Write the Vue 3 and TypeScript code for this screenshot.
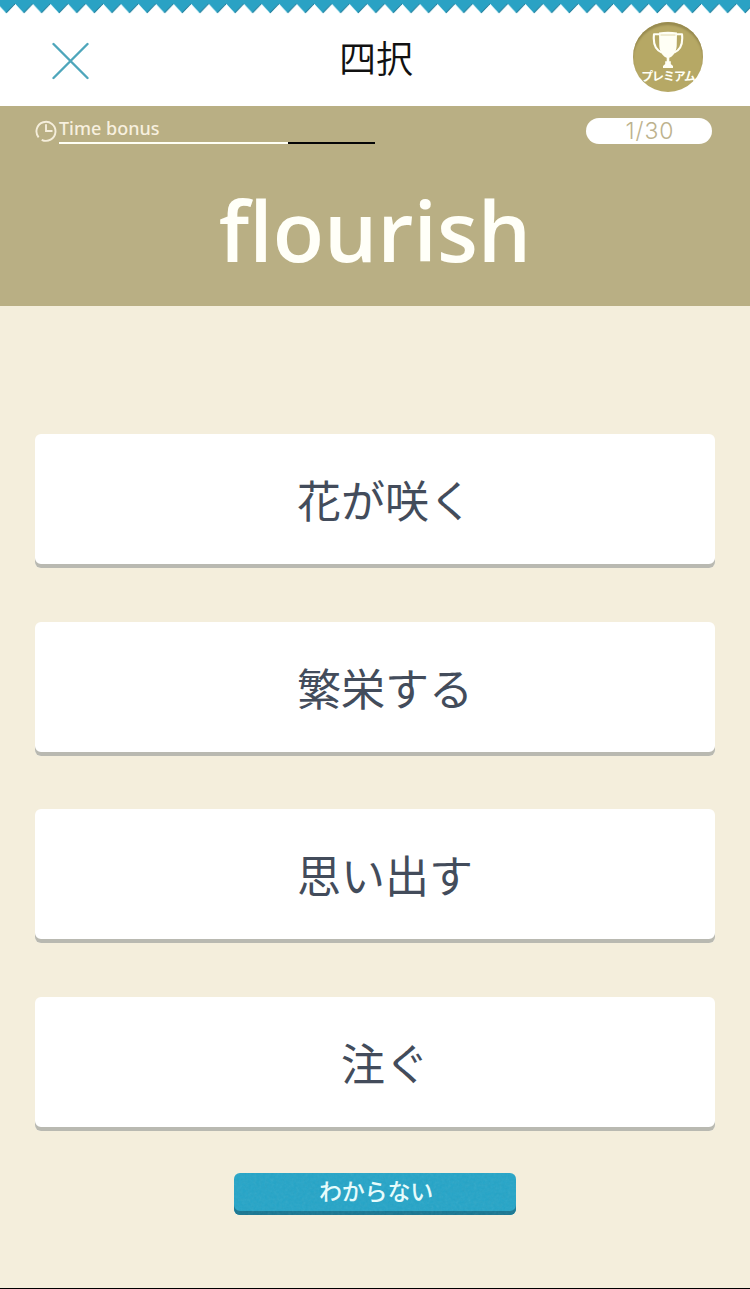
<script setup lang="ts">
interface Choice {
  id: number
  label: string
}

const choices: Choice[] = [
  { id: 1, label: '花が咲く' },
  { id: 2, label: '繁栄する' },
  { id: 3, label: '思い出す' },
  { id: 4, label: '注ぐ' },
]
const word = 'flourish'
const current = 1
const total = 30
const timeLeft = 72.5
</script>

<template>
  <main class="screen">
    <header class="header">
      <svg class="zigzag" width="750" height="16" aria-hidden="true">
        <defs>
          <pattern id="teeth" x="-2.6" y="0" width="17.59" height="16" patternUnits="userSpaceOnUse">
            <path d="M0 0H17.59V3.6L8.8 14L0 3.6Z" fill="#dff8fc" />
            <path d="M0 0H17.59V3.6L8.8 13L0 3.6Z" fill="#2aa2c4" />
            <path d="M17.59 3.8L8.8 12.9" fill="none" stroke="#247f9c" stroke-width="1.1" />
          </pattern>
        </defs>
        <rect width="750" height="16" fill="url(#teeth)" />
      </svg>
      <button class="close" aria-label="閉じる">
        <svg width="38" height="38" viewBox="0 0 38 38">
          <path d="M2.5 2L36.5 36M36.5 2L2.5 36" stroke="#4ea6bb" stroke-width="2.4" stroke-linecap="round" />
        </svg>
      </button>
      <h1 class="title">四択</h1>
      <div class="premium">
        <svg class="cup" width="32" height="38" viewBox="0 0 32 38">
          <path d="M7 1.4Q16 .1 25 1.4L24.7 15C24.2 22 20.5 25.5 17.3 26.8V30.2H18.8V33L21 35V37H11V35L13.2 33V30.2H14.7V26.8C11.5 25.5 7.8 22 7.3 15Z" fill="#fffff5" />
          <path d="M7 3.2H2C1 12 2.5 18.5 9.8 21.5M25 3.2H30C31 12 29.5 18.5 22.2 21.5" fill="none" stroke="#fffff5" stroke-width="2.1" stroke-linejoin="round" />
          <path d="M8.5 4H23.5" stroke="#d8ce9d" stroke-width=".8" />
        </svg>
        <span class="premium-label">プレミアム</span>
      </div>
    </header>

    <section class="question">
      <div class="status">
        <svg class="clock" width="22" height="23" viewBox="0 0 22 23">
          <path d="M3.6 17.3A9.5 9.5 0 1 1 6.7 19.8" fill="none" stroke="#f5eedb" stroke-width="1.9" />
          <path d="M11 4.3V11H17.5" fill="none" stroke="#f5eedb" stroke-width="1.9" />
        </svg>
        <div class="bonus">
          <span class="bonus-label">Time bonus</span>
          <div class="track"><div class="remaining" :style="{ width: timeLeft + '%' }"></div></div>
        </div>
        <span class="counter">{{ current }}/{{ total }}</span>
      </div>
      <p class="word">{{ word }}</p>
    </section>

    <section class="choices">
      <button v-for="choice in choices" :key="choice.id" class="choice">{{ choice.label }}</button>
    </section>

    <button class="unknown">
      <svg class="grain" width="282" height="42" aria-hidden="true">
        <filter id="speckle">
          <feTurbulence type="fractalNoise" baseFrequency=".35" numOctaves="2" seed="4" />
          <feColorMatrix type="saturate" values="0" />
        </filter>
        <rect width="282" height="38" filter="url(#speckle)" />
      </svg>
      <span class="unknown-label">わからない</span>
    </button>
  </main>
</template>

<style>
body {
  background: #f4eedc;
}
</style>

<style scoped>
.screen {
  box-sizing: border-box;
  width: 750px;
  height: 1289px;
  display: flex;
  flex-direction: column;
  align-items: center;
  overflow: hidden;
  background: #f4eedc;
  border-bottom: 1px solid #000;
  font-family: "Noto Sans CJK JP", sans-serif;
}
button {
  appearance: none;
  border: 0;
  padding: 0;
  margin: 0;
  font-family: inherit;
}
.header {
  position: relative;
  box-sizing: border-box;
  width: 100%;
  height: 106px;
  flex: none;
  padding: 22px 47px 0 51px;
  display: grid;
  grid-template-columns: 70px 1fr 70px;
  background: #fff;
}
.zigzag {
  position: absolute;
  top: 0;
  left: 0;
}
.close {
  width: 38px;
  height: 38px;
  margin-top: 20px;
  background: none;
}
.close svg {
  display: block;
}
.title {
  margin: 8px 2px 0 0;
  text-align: center;
  font-size: 37px;
  line-height: 54px;
  font-weight: 350;
  color: #111;
}
.premium {
  width: 70px;
  height: 70px;
  border-radius: 50%;
  background: #b6a865;
  box-shadow: inset 0 3px 2px #988b50;
  display: flex;
  flex-direction: column;
  align-items: center;
}
.cup {
  flex: none;
  margin-top: 9px;
}
.premium-label {
  font-size: 12px;
  letter-spacing: -1.1px;
  line-height: 13px;
  font-weight: 700;
  color: #fffff5;
  white-space: nowrap;
}
.question {
  width: 100%;
  height: 200px;
  flex: none;
  background: #b9af84;
}
.status {
  display: flex;
  align-items: flex-start;
  padding: 12px 38px 0 35px;
}
.clock {
  flex: none;
  margin: 2px 2px 0 0;
}
.bonus {
  width: 316px;
}
.bonus-label {
  display: block;
  height: 24px;
  font: 500 18px/20px "Noto Sans", sans-serif;
  color: #f7f0df;
}
.track {
  height: 2px;
  background: #050507;
}
.remaining {
  height: 100%;
  background: #fffff5;
}
.counter {
  box-sizing: border-box;
  width: 126px;
  height: 26px;
  padding-left: 2px;
  margin-left: auto;
  border-radius: 13px;
  background: #fff;
  color: #bdb28d;
  font: 300 23px/27px Inter, sans-serif;
  letter-spacing: .9px;
  text-align: center;
}
.word {
  margin: 26px 0 0;
  text-align: center;
  font: 600 84px/120px "Open Sans", sans-serif;
  font-variant-ligatures: none;
  color: #fffff8;
}
.choices {
  display: grid;
  grid-auto-rows: 134px;
  row-gap: 53.7px;
  width: 680px;
  margin-top: 128px;
}
.choice {
  box-sizing: border-box;
  padding: 0 0 4px 20px;
  border-radius: 6px;
  background: #fff;
  box-shadow: inset 0 -4px #b9b9b1;
  color: #434c5b;
  font-size: 44px;
  font-weight: 400;
}
.unknown {
  position: relative;
  width: 282px;
  height: 42px;
  flex: none;
  margin-top: 42px;
  border-radius: 6px;
  overflow: hidden;
  background: #25a5c8;
  box-shadow: inset 0 -4px #187692;
}
.grain {
  position: absolute;
  top: 0;
  left: 0;
  opacity: .1;
}
.unknown-label {
  display: block;
  padding: 0 0 7px 2px;
  color: #e9ffff;
  font-size: 23px;
  letter-spacing: -.2px;
  line-height: 35px;
  font-weight: 500;
}
</style>
